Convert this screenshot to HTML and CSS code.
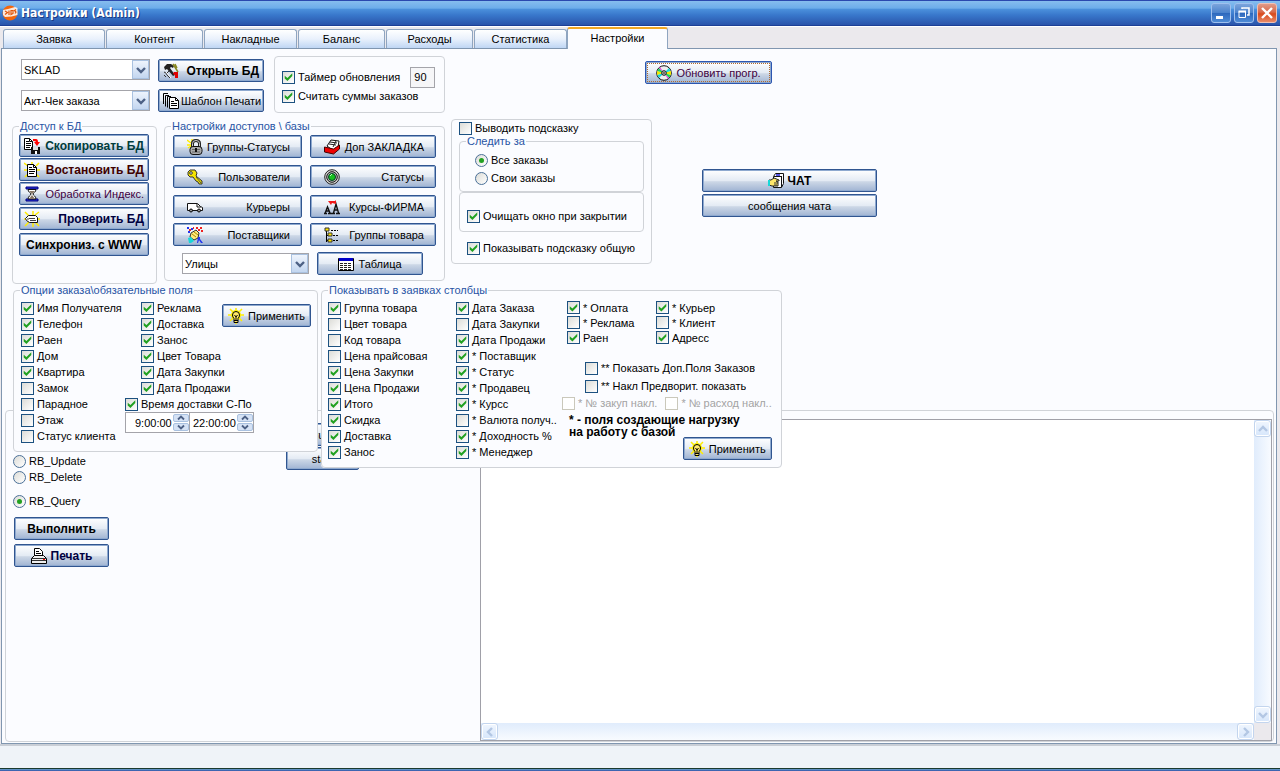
FILE: index.html
```html
<!DOCTYPE html>
<html lang="ru">
<head>
<meta charset="utf-8">
<title>Настройки (Admin)</title>
<link rel="stylesheet" href="styles.css">
</head>
<body>
<svg class="defs" aria-hidden="true">
  <symbol id="i-tools" viewBox="0 0 16 16"><path d="M1 4l3-3h4l3 2-1 2-2-1-1 1 5 7-2 1-6-7-2 1z" fill="#222"/><path d="M10 1l5 8M12 1l2 4" stroke="#882" stroke-width="1.5"/><path d="M11 9h4v6h-3v-3l-2-1z" fill="#e00000"/><path d="M1 9l2 1 1 2 3 3M1 12l2 2M6 8l-2 2" stroke="#333" fill="none"/><path d="M3 9l5 6" stroke="#fff"/></symbol>
  <symbol id="i-pages" viewBox="0 0 16 16"><path d="M.5 11V.5H5M2.500 13.500V2.500H6M4.500 14.500V3.500H8" fill="none" stroke="#000"/><path d="M6.500 4.500h6l3 3v8h-9z" fill="#fff" stroke="#000"/><path d="M12.500 4.500v3h3M8 8.500h3M8 10.500h6M8 12.500h6" fill="none" stroke="#000"/></symbol>
  <symbol id="i-copy" viewBox="0 0 16 16"><path d="M.5.500h5l3 3v8h-8z" fill="#fff" stroke="#000"/><path d="M2 3.500h3M2 5.500h5M2 7.500h5M2 9.500h4M5.500.500v3h3" fill="none" stroke="#000"/><path d="M9 1h3q2 0 2 3h2l-3 4-3-4h2q0-1-3-1z" fill="red"/><path d="M7 9h9v7H7z" fill="#111"/><path d="M9 9h5v3H9z" fill="#ddd"/><path d="M11 13h2v3h-2z" fill="#fff"/></symbol>
  <symbol id="i-restore" viewBox="0 0 16 16"><path d="M0 1l4 3M8 0v3M15 1l-3 3M0 8h16M1 15l4-4M15 15l-4-4" stroke="#ffec00" stroke-width="1.500"/><path d="M3.500 2.500h6l3 3v9h-9z" fill="#fff" stroke="#000"/><path d="M9.500 2.500v3h3M5 5.500h3M5 7.500h6M5 9.500h6M5 11.500h5" fill="none" stroke="#000"/></symbol>
  <symbol id="i-glass" viewBox="0 0 16 16"><path d="M2 1h12v2H2zM2 13h12v2H2z" fill="#2a35d8" stroke="#000080"/><path d="M4 3.500h8c0 3-3 3-3 4.500s3 2 3 5H4c0-3 3-3.500 3-5S4 6.500 4 3.500z" fill="#fff" stroke="#111"/><path d="M5 5h6L8 8zM8 9l3 4H5z" fill="#876"/></symbol>
  <symbol id="i-check" viewBox="0 0 16 16"><path d="M1 1l4 4M9 0v4M15 1l-4 3M0 8h16M1 15l4-4M9 12v4M15 15l-4-4" stroke="#ffec00" stroke-width="1.500"/><path d="M1.500 7.500l3-3h7l2 2v5h-8l-3-2z" fill="#fff" stroke="#111"/><path d="M5 7.500h6M6 9.500h6M3 8h2" stroke="#444"/></symbol>
  <symbol id="i-lock" viewBox="0 0 16 16"><path d="M0 1l4 3M0 6h4M5 0v3M1 9l3-2" stroke="#ffec00" stroke-width="1.500"/><path d="M5.500 8V4.500q0-3 3.500-3t3.500 3V8" fill="none" stroke="#222" stroke-width="3"/><path d="M5.500 8V4.500q0-3 3.500-3t3.500 3V8" fill="none" stroke="#ccc"/><rect x="3" y="7.500" width="12" height="8" rx="3" fill="#aaa" stroke="#111"/><path d="M5 10.500h8M5 13h8" stroke="#666"/><path d="M8 9h2v4H8z" fill="#111"/></symbol>
  <symbol id="i-key" viewBox="0 0 16 16"><path d="M1 3l2-2h5l2 3-1 3 6 5v3h-3l-1-2-2-1-3-4H3L1 6z" fill="#f5e400" stroke="#333"/><circle cx="4" cy="4" r="1.300" fill="#fff" stroke="#333"/><path d="M9 8l5 6" stroke="#554"/></symbol>
  <symbol id="i-van" viewBox="0 0 16 16"><path d="M.5 4.500h10l3 3 2 1v3H.5z" fill="#fff" stroke="#111"/><path d="M10 5v3h4" fill="none" stroke="#111"/><circle cx="4" cy="11.500" r="1.500" fill="#999" stroke="#000"/><circle cx="12" cy="11.500" r="1.500" fill="#999" stroke="#000"/></symbol>
  <symbol id="i-suppliers" viewBox="0 0 16 16"><path d="M0 0h2v2H0zM4 1h2v2H4zM1 4h2v2H1z" fill="#23e"/><path d="M9 0h2v2H9zM13 0h2v2h-2zM11 2h2v2h-2zM14 3h2v2h-2zM2 2h2v2H2zM6 0h1v2H6z" fill="#e22"/><path d="M4 6l5-3 3 3-1 5-4 2-4-3z" fill="#ffe97a" stroke="#333"/><path d="M5 7l4 3M7 5l4 3" stroke="#a80"/><path d="M1 11l3-1 3 4-3 2H2z" fill="#18d8d8"/><path d="M11 10h2v2l3 4h-2l-2-3-1 3h-1z" fill="#23e"/></symbol>
  <symbol id="i-cards" viewBox="0 0 16 16"><path d="M3 7l4-6 8 1-1 6-4 4z" fill="#fff" stroke="#111"/><path d="M5 5l7 1M6 3l7 1M12 2l-3 6" stroke="#222"/><path d="M.5 8l9 2 6-4v4l-6 5-9-2z" fill="#f00000" stroke="#400"/></symbol>
  <symbol id="i-target" viewBox="0 0 16 16"><circle cx="8" cy="8" r="7.300" fill="#ddd" stroke="#222"/><circle cx="8" cy="8" r="5.300" fill="#bbb" stroke="#111"/><circle cx="8" cy="8" r="3.500" fill="#18c020" stroke="#042"/><path d="M6 7l2-2" stroke="#bfb"/></symbol>
  <symbol id="i-fonts" viewBox="0 0 16 16"><path d="M0 14.500h3M4 14.500h4M1.200 14L3.500 8l2.500 6M2 12h3M8 14.500h3M12 14.500h4M9.500 14L12 5l2.500 9M10 11h4" fill="none" stroke="#111" stroke-width="1.400"/><path d="M4 2h7l1-1v4L8 4 7 6z" fill="#f01818"/></symbol>
  <symbol id="i-tree" viewBox="0 0 16 16"><path d="M2.500 3v12M3 8.500h3M3 13.500h3" stroke="#000"/><path d="M7 3.500h7M9 8.500h6M9 13.500h6" stroke="#000" stroke-dasharray="2 1"/><path d="M1 1h4v3H1zM4 6h4v3H4zM4 12h4v3H4z" fill="#ffe500" stroke="#333"/></symbol>
  <symbol id="i-table" viewBox="0 0 16 16"><path d="M.5 2.500h15v12H.5z" fill="#fff" stroke="#000"/><path d="M1 2h14v3H1z" fill="#0000c8"/><path d="M2 7.500h12M2 9.500h12M2 11.500h12M2 13.500h12" stroke="#222" stroke-dasharray="3 1"/></symbol>
  <symbol id="i-cd" viewBox="0 0 16 16"><circle cx="8" cy="8" r="7.300" fill="#eee" stroke="#111"/><path d="M8 8L1 6v4z" fill="#f0e800"/><path d="M8 8l7-2v4z" fill="#f0e800"/><path d="M8 8L1.500 6l1.500-3zM8 8l6.500 2-1.500 3z" fill="#18d858"/><path d="M8 8L1.500 10l1.500 3zM8 8l6.500-2L13 3z" fill="#18d8d8"/><path d="M8 8L3 3l1-1zM8 8l5 5-1 1z" fill="#e83ae8"/><circle cx="8" cy="8" r="2.300" fill="#ccc" stroke="#111"/><circle cx="8" cy="8" r=".8"/></symbol>
  <symbol id="i-bulb" viewBox="0 0 16 16"><path d="M8 0v16M0 7h16M2 1l12 12M14 1L2 13" stroke="#ffee00" stroke-width="1.500"/><circle cx="8" cy="7" r="5" fill="#fff000"/><path d="M6 10.500Q4.500 9 4.500 7a3.500 3.500 0 017 0q0 2-1.500 3.500v4H6z" fill="#ffe96a" stroke="#000"/><path d="M6.500 7l1.500 2 1.500-2M8 9v3M6 12.500h4" fill="none" stroke="#000"/></symbol>
  <symbol id="i-chat" viewBox="0 0 16 16"><path d="M5.500 3.500l2-3h8v10l-2 4h-8z" fill="#fff" stroke="#111"/><path d="M6 3.500h7M13.500 3v11" stroke="#111"/><path d="M8 2h4" stroke="#22d" stroke-width="1.500"/><path d="M1 7h2l3-2 5 2v1H8l2 1v4H4L1 12z" fill="#ffe86a" stroke="#222"/><path d="M0 7h2v6H0z" fill="#18d8d8"/><path d="M6 10h4M6 12h3" stroke="#333"/></symbol>
  <symbol id="i-print" viewBox="0 0 16 16"><path d="M3.500 8V.500h5l3 3V8" fill="#fff" stroke="#000"/><path d="M5 3.500h3M5 5.500h5" stroke="#000"/><path d="M.5 10.500l3-3h9l3 3v5H.5z" fill="#eee" stroke="#000"/><path d="M1 10.500h14M1 12.500h14" stroke="#333"/><path d="M12 11h2v1h-2z" fill="red"/></symbol>
  <symbol id="i-down" viewBox="0 0 10 8"><path d="M1 2l4 4 4-4" fill="none" stroke="#4d6185" stroke-width="2.400"/></symbol>
  <symbol id="i-chev" viewBox="0 0 10 10"><path d="M1 3l4 4 4-4" fill="none" stroke="#b3c7e4" stroke-width="2.400"/></symbol>
</svg>

<div class="window">
  <header class="titlebar">
    <svg class="logo" viewBox="0 0 16 16"><circle cx="8" cy="8" r="7.500" fill="#f2660e"/><path d="M1 5l5-1 7-2 2.500 1v7l-6 1.500L3 12 1 10z" fill="#fff" opacity=".85"/><path d="M3 6l2.500 1.500L3 9.500M7 5.500v4.500M9 5.500v4l2-1v-3zM14 4.500l-1.500 1L14 7l-1 1.500" fill="none" stroke="#e2560b" stroke-width="1.200"/></svg>
    <h1>Настройки (Admin)</h1>
    <button class="cap" aria-label="Свернуть"><svg viewBox="0 0 18 18"><path d="M4 12h7v3H4z" fill="#fff"/></svg></button>
    <button class="cap" aria-label="Восстановить"><svg viewBox="0 0 18 18"><path d="M7 5V4h7v7h-2" fill="none" stroke="#fff" stroke-width="1.500"/><path d="M4 7.500h6.500v6H4z" fill="none" stroke="#fff"/><path d="M3.500 7.500h7.500" stroke="#fff" stroke-width="2"/></svg></button>
    <button class="cap close" aria-label="Закрыть"><svg viewBox="0 0 18 18"><path d="M4 4l10 10M14 4L4 14" stroke="#fff" stroke-width="2.400"/></svg></button>
  </header>

  <nav class="tabs">
    <button class="w102">Заявка</button><button class="w97">Контент</button><button class="w93">Накладные</button><button class="w87">Баланс</button><button class="w87">Расходы</button><button class="w93">Статистика</button><button class="w101 active">Настройки</button>
  </nav>

  <main class="page">
    <div class="top">
      <div class="leftcol">
        <div class="dbrow">
          <div class="combos">
            <div class="combo"><select aria-label="База данных"><option>SKLAD</option></select><span><svg><use href="#i-down"/></svg></span></div>
            <div class="combo"><select aria-label="Шаблон"><option>Акт-Чек заказа</option></select><span><svg><use href="#i-down"/></svg></span></div>
          </div>
          <div class="dbbuttons">
            <button class="btn tight bold"><svg><use href="#i-tools"/></svg>Открыть БД</button>
            <button class="btn tight"><svg><use href="#i-pages"/></svg>Шаблон Печати</button>
          </div>
          <div class="frame timer">
            <div class="timerline"><label><input type="checkbox" checked>Таймер обновления</label><input class="num" type="text" value="90" aria-label="Интервал"></div>
            <label><input type="checkbox" checked>Считать суммы заказов</label>
          </div>
        </div>
        <div class="groups">
          <fieldset class="access">
            <legend>Доступ к БД</legend>
            <div class="accessgrid">
              <button class="btn tight bold green"><svg><use href="#i-copy"/></svg>Скопировать БД</button>
              <button class="btn tight bold maroon"><svg><use href="#i-restore"/></svg>Востановить БД</button>
              <button class="btn tight purple"><svg><use href="#i-glass"/></svg>Обработка Индекс.</button>
              <button class="btn tight bold navy"><svg><use href="#i-check"/></svg>Проверить БД</button>
              <button class="btn bold">Синхрониз. с WWW</button>
            </div>
          </fieldset>
          <fieldset class="rights">
            <legend>Настройки доступов \ базы</legend>
            <div class="rightsgrid">
              <button class="btn spread"><svg><use href="#i-lock"/></svg>Группы-Статусы</button>
              <button class="btn spread"><svg><use href="#i-cards"/></svg>Доп ЗАКЛАДКА</button>
              <button class="btn spread"><svg><use href="#i-key"/></svg>Пользователи</button>
              <button class="btn spread"><svg><use href="#i-target"/></svg>Статусы</button>
              <button class="btn spread"><svg><use href="#i-van"/></svg>Курьеры</button>
              <button class="btn spread"><svg><use href="#i-fonts"/></svg>Курсы-ФИРМА</button>
              <button class="btn spread"><svg><use href="#i-suppliers"/></svg>Поставщики</button>
              <button class="btn spread"><svg><use href="#i-tree"/></svg>Группы товара</button>
            </div>
            <div class="tablerow">
              <div class="combo"><select aria-label="Таблица"><option>Улицы</option></select><span><svg><use href="#i-down"/></svg></span></div>
              <button class="btn"><svg><use href="#i-table"/></svg>Таблица</button>
            </div>
          </fieldset>
        </div>
      </div>

      <div class="rightcol">
        <button class="btn update purple"><svg><use href="#i-cd"/></svg>Обновить прогр.</button>
        <div class="hintrow">
          <div class="frame hint">
            <label><input type="checkbox">Выводить подсказку</label>
            <fieldset class="watch">
              <legend>Следить за</legend>
              <label><input type="radio" name="watch" checked>Все заказы</label>
              <label><input type="radio" name="watch">Свои заказы</label>
            </fieldset>
            <div class="frame clear"><label><input type="checkbox" checked>Очищать окно при закрытии</label></div>
            <label class="common"><input type="checkbox" checked>Показывать подсказку общую</label>
          </div>
          <div class="chat">
            <button class="btn bold"><svg><use href="#i-chat"/></svg>ЧАТ</button>
            <button class="btn">сообщения чата</button>
          </div>
        </div>
      </div>
    </div>

    <div class="lower">
      <div class="options">
        <fieldset class="fields">
          <legend>Опции заказа\обязательные поля</legend>
          <div class="fieldsbody">
            <div class="list">
              <label><input type="checkbox" checked>Имя Получателя</label>
              <label><input type="checkbox" checked>Телефон</label>
              <label><input type="checkbox" checked>Раен</label>
              <label><input type="checkbox" checked>Дом</label>
              <label><input type="checkbox" checked>Квартира</label>
              <label><input type="checkbox">Замок</label>
              <label><input type="checkbox">Парадное</label>
              <label><input type="checkbox">Этаж</label>
              <label><input type="checkbox">Статус клиента</label>
            </div>
            <div class="second">
              <div class="withapply">
                <div class="list">
                  <label><input type="checkbox" checked>Реклама</label>
                  <label><input type="checkbox" checked>Доставка</label>
                  <label><input type="checkbox" checked>Занос</label>
                  <label><input type="checkbox" checked>Цвет Товара</label>
                  <label><input type="checkbox" checked>Дата Закупки</label>
                  <label><input type="checkbox" checked>Дата Продажи</label>
                </div>
                <button class="btn apply"><svg><use href="#i-bulb"/></svg>Применить</button>
              </div>
              <label><input type="checkbox" checked>Время доставки С-По</label>
              <div class="times">
                <div class="time"><input type="text" value="9:00:00" aria-label="С"><span class="spin"><button aria-label="Больше"><svg class="up"><use href="#i-down"/></svg></button><button aria-label="Меньше"><svg><use href="#i-down"/></svg></button></span></div>
                <div class="time"><input type="text" value="22:00:00" aria-label="По"><span class="spin"><button aria-label="Больше"><svg class="up"><use href="#i-down"/></svg></button><button aria-label="Меньше"><svg><use href="#i-down"/></svg></button></span></div>
              </div>
            </div>
          </div>
        </fieldset>

        <fieldset class="columns">
          <legend>Показывать в заявках столбцы</legend>
          <div class="columnsbody">
            <div class="list">
              <label><input type="checkbox" checked>Группа товара</label>
              <label><input type="checkbox">Цвет товара</label>
              <label><input type="checkbox">Код товара</label>
              <label><input type="checkbox">Цена прайсовая</label>
              <label><input type="checkbox" checked>Цена Закупки</label>
              <label><input type="checkbox" checked>Цена Продажи</label>
              <label><input type="checkbox" checked>Итого</label>
              <label><input type="checkbox" checked>Скидка</label>
              <label><input type="checkbox" checked>Доставка</label>
              <label><input type="checkbox" checked>Занос</label>
            </div>
            <div class="list">
              <label><input type="checkbox" checked>Дата Заказа</label>
              <label><input type="checkbox">Дата Закупки</label>
              <label><input type="checkbox" checked>Дата Продажи</label>
              <label><input type="checkbox" checked>* Поставщик</label>
              <label><input type="checkbox" checked>* Статус</label>
              <label><input type="checkbox" checked>* Продавец</label>
              <label><input type="checkbox" checked>* Курсс</label>
              <label><input type="checkbox">* Валюта получ..</label>
              <label><input type="checkbox" checked>* Доходность %</label>
              <label><input type="checkbox" checked>* Менеджер</label>
            </div>
            <div class="extra">
              <div class="pairs">
                <label><input type="checkbox" checked>* Оплата</label><label><input type="checkbox" checked>* Курьер</label>
                <label><input type="checkbox">* Реклама</label><label><input type="checkbox">* Клиент</label>
                <label><input type="checkbox" checked>Раен</label><label><input type="checkbox" checked>Адресс</label>
              </div>
              <div class="stars">
                <label><input type="checkbox"><span>** Показать Доп.Поля Заказов</span></label>
                <label><input type="checkbox"><span>** Накл Предворит. показать</span></label>
              </div>
              <div class="disabled">
                <label><input type="checkbox" disabled>* № закуп накл.</label>
                <label><input type="checkbox" disabled>* № расход накл..</label>
              </div>
              <p class="note">* - поля создающие нагрузку<br>на работу с базой</p>
              <button class="btn apply"><svg><use href="#i-bulb"/></svg>Применить</button>
            </div>
          </div>
        </fieldset>
      </div>

      <section class="frame sql">
        <div class="sqlside">
          <div class="query">
            <label><input type="radio" name="rb">RB_Update</label>
            <label><input type="radio" name="rb">RB_Delete</label>
            <label class="spaced"><input type="radio" name="rb" checked>RB_Query</label>
            <button class="btn bold">Выполнить</button>
            <button class="btn bold navy"><svg><use href="#i-print"/></svg>Печать</button>
          </div>
          <div class="run">
            <button class="btn">run</button>
            <button class="btn">start</button>
          </div>
        </div>
        <div class="memo">
          <textarea aria-label="SQL"></textarea>
          <div class="vbar"><button aria-label="Вверх"><svg class="up"><use href="#i-chev"/></svg></button><button aria-label="Вниз"><svg><use href="#i-chev"/></svg></button></div>
          <div class="hbar"><button aria-label="Влево"><svg class="left"><use href="#i-chev"/></svg></button><button aria-label="Вправо"><svg class="right"><use href="#i-chev"/></svg></button></div>
        </div>
      </section>
    </div>
  </main>

  <footer class="status"></footer>
  <div class="deskedge"></div>
</div>
</body>
</html>
```

FILE: styles.css
```css
* { box-sizing: border-box; }

body {
  margin: 0;
  font: 11px/14px "Liberation Sans", Arial, sans-serif;
  color: #000;
}

button, input, select, textarea { font: inherit; color: inherit; margin: 0; }
.defs { display: none; }
fieldset { margin: 0; padding: 0; min-width: 0; }
legend { margin-left: 6px; padding: 0 1px; line-height: 12px; color: #2854a4; }
fieldset, .frame { border: 1px solid #d0d3d8; border-radius: 4px; }

.window {
  display: flex;
  flex-direction: column;
  min-height: 100vh;
  background: #ebe9ed;
}

/* Title bar */
.titlebar {
  display: flex;
  align-items: center;
  gap: 3px;
  height: 26px;
  padding: 0 3px 0 2px;
  border-top: 1px solid #2a48ae;
  border-bottom: 1px solid #1d3f96;
  background: linear-gradient(#86bdee, #6cacea 30%, #4b90dc 34%, #3876ca 60%, #2a54aa);
}
.logo { width: 16px; height: 16px; }
.titlebar h1 {
  flex: 1;
  margin: 0;
  font: bold 12px/16px "DejaVu Sans Condensed", "DejaVu Sans", sans-serif;
  color: #fff;
  text-shadow: 1px 1px #1c3a80;
}
.cap {
  width: 20px;
  height: 20px;
  padding: 0;
  border: 1px solid #9fc0ee;
  border-radius: 3px;
  background: linear-gradient(#7ba4dc, #4a82cc 50%, #2d68bd 51%, #4e8bd6);
}
.cap svg { display: block; width: 18px; height: 18px; }
.close { background: linear-gradient(#e09a88, #d8694a 45%, #d94a1c 55%, #e88a68); border-color: #f0c0b4; }

/* Tabs */
.tabs {
  display: flex;
  align-items: flex-end;
  gap: 1px;
  height: 22px;
  padding-left: 3px;
  border-top: 1px solid #fff;
}
.tabs button {
  height: 19px;
  padding: 0;
  border: 1px solid #8fa5c0;
  border-bottom: 0;
  border-radius: 3px 3px 0 0;
  background: linear-gradient(#fff, #e9f1fc 50%, #bfd6f4);
}
.tabs .active {
  height: 22px;
  margin: 0 0 -1px -1px;
  padding-bottom: 3px;
  background: #fbfcff;
  border-top: 2px solid #f2a824;
  z-index: 1;
}
.w87 { width: 87px; }
.w93 { width: 93px; }
.w97 { width: 97px; }
.w101 { width: 101px; }
.w102 { width: 102px; }

.page {
  flex: 1;
  display: flex;
  flex-direction: column;
  margin: 0 3px 0 1px;
  padding: 7px 2px 1px 3px;
  border: 1px solid #8096b0;
  background: #fbfcff;
}

/* Buttons */
.btn {
  display: flex;
  align-items: center;
  justify-content: center;
  gap: 4px;
  height: 23px;
  padding: 0 3px;
  border: 1px solid #305590;
  border-radius: 2px;
  background: linear-gradient(#fff, #e4ebf4 50%, #ccd7e6 56%, #a0b4d3);
  box-shadow: inset 0 0 0 1px #8ea9cf;
  white-space: nowrap;
}
.btn svg { width: 16px; height: 16px; flex: none; }
.tight { justify-content: space-between; padding: 0 4px; gap: 2px; }
.spread { justify-content: space-between; padding: 0 11px 0 13px; }
.bold { font-weight: bold; font-size: 12px; }
.green { color: #003c3c; }
.maroon { color: #400000; }
.purple { color: #400040; }
.navy { color: #000040; }
.apply { width: 89px; }

/* Drop-downs */
.combo {
  display: flex;
  height: 21px;
  width: 129px;
  border: 1px solid #a4a4aa;
  background: #fff;
}
.combo select {
  flex: 1;
  min-width: 0;
  padding: 0 2px;
  border: 0;
  background: #fff;
  appearance: none;
}
.combo span {
  display: flex;
  align-items: center;
  justify-content: center;
  width: 17px;
  border: 1px solid #a9c1e0;
  background: linear-gradient(#eef4fd, #c3d6f0);
}
.combo svg { width: 10px; height: 8px; }

/* Check boxes and radio buttons */
label { display: flex; align-items: center; gap: 3px; height: 16px; white-space: nowrap; }
input[type="checkbox"], input[type="radio"] {
  appearance: none;
  flex: none;
  display: grid;
  place-items: center;
  width: 13px;
  height: 13px;
  border: 1px solid #1c5180;
  background: linear-gradient(135deg, #dcdcd7, #fff);
}
input[type="radio"] { border-radius: 50%; border-color: #4a7098; }
input[type="checkbox"]:checked::before {
  content: "";
  width: 9px;
  height: 9px;
  background: #21a121;
  clip-path: polygon(8% 35%, 38% 62%, 92% 8%, 92% 40%, 38% 95%, 8% 66%);
}
input[type="radio"]:checked::before {
  content: "";
  width: 5px;
  height: 5px;
  border-radius: 50%;
  background: #21a121;
}
input[type="checkbox"]:disabled { border-color: #cac8bb; background: #fff; }

/* Upper part */
.top { display: flex; gap: 6px; }
.leftcol { width: 433px; margin-left: 7px; flex: none; }
.dbrow { display: flex; gap: 8px; padding-left: 9px; height: 57px; }
.combos, .dbbuttons { display: flex; flex-direction: column; gap: 10px; padding-top: 3px; }
.dbbuttons { gap: 7px; width: 106px; }
.timer { flex: 1; padding: 9px 7px; margin-left: 2px; }
.timerline { display: flex; align-items: center; gap: 10px; height: 22px; }
.num { width: 25px; height: 21px; padding: 0 3px; border: 1px solid #a4a4aa; background: #f6f6f8; }

.groups { display: flex; align-items: flex-start; gap: 7px; padding-top: 7px; }
.access { width: 145px; height: 164px; }
.accessgrid { display: grid; grid-template-rows: 24px 24px 25px 26px 24px; margin: 2px 7px 0 6px; }
.rights { flex: 1; height: 161px; }
.rightsgrid { display: grid; grid-template-columns: 1fr 1fr; column-gap: 8px; grid-template-rows: 30px 30px 28px 29px; margin: 3px 8px 0; }
.tablerow { display: flex; align-items: center; gap: 8px; padding-left: 17px; }
.tablerow .combo { width: 127px; }
.tablerow .btn { width: 106px; }

.rightcol { flex: 1; padding-top: 5px; }
.update { width: 127px; margin-left: 194px; border-color: #2c56b0; outline: 1px dotted #b06a30; outline-offset: -3px; }
.hintrow { display: flex; gap: 50px; padding-top: 35px; }
.hint { width: 201px; height: 145px; padding: 0 7px; }
.watch { height: 57px; margin-top: -1px; padding: 4px 0 0 15px; }
.watch legend { margin-left: -9px; }
.watch label { height: 18px; }
.clear { height: 40px; padding: 15px 0 0 7px; }
.common { margin: 8px 0 0 8px; }
.chat { display: flex; flex-direction: column; gap: 2px; width: 175px; padding-top: 50px; }

/* Lower part: the option groups lie over the query panel */
.lower { flex: 1; display: grid; grid-template-rows: 126px 1fr; grid-template-columns: 1fr; }
.options { grid-area: 1 / 1 / 3 / 2; align-self: start; justify-self: start; display: flex; align-items: flex-start; gap: 3px; margin-left: 8px; z-index: 1; }
.options fieldset { background: #fbfcff; }
.sql { grid-area: 2 / 1 / 3 / 2; display: flex; padding: 8px 1px 0 7px; }

.fields { width: 305px; height: 168px; }
.columns { width: 461px; height: 184px; }
.fieldsbody { display: grid; grid-template-columns: 104px 1fr; padding: 4px 7px; }
.withapply { display: flex; padding-left: 16px; }
.withapply .list { width: 81px; flex: none; }
.withapply .apply { flex: none; margin-top: 4px; }
.times { display: flex; width: 129px; height: 21px; border: 1px solid #a4a4aa; background: #fff; }
.time { flex: 1; display: flex; min-width: 0; }
.time + .time { border-left: 1px solid #a4a4aa; }
.time input { flex: 1; min-width: 0; padding: 0 0 0 3px; border: 0; background: none; }
.time:first-child input { padding-left: 9px; }
.spin { display: flex; flex-direction: column; gap: 1px; width: 16px; padding: 1px 0; }
.spin button { flex: 1; display: grid; place-items: center; min-height: 0; padding: 0; border: 1px solid #a9c1e0; border-radius: 2px; background: #d5e2f5; }
.spin svg { width: 8px; height: 6px; }
.up { transform: rotate(180deg); }
.left { transform: rotate(90deg); }
.right { transform: rotate(270deg); }

.columnsbody { display: grid; grid-template-columns: 128px 106px 1fr; padding: 4px 11px 0 6px; }
.extra { display: flex; flex-direction: column; }
.pairs { display: grid; grid-template-columns: 89px 1fr; padding-left: 5px; }
.pairs label { height: 15px; }
.stars { width: 194px; padding: 14px 0 0 23px; }
.stars label { height: 18px; }
.stars span { overflow: hidden; }
.disabled { display: flex; gap: 8px; color: #a3a3a3; }
.note { margin: 3px 0 0 7px; font-weight: bold; font-size: 12px; line-height: 12px; }
.extra .apply { align-self: flex-end; margin-top: -1px; }

.sqlside { display: flex; width: 467px; flex: none; }
.query { width: 96px; padding-top: 34px; }
.query .spaced { margin: 8px 0; }
.query .btn { width: 95px; margin: 0 0 4px 1px; }
.run { width: 73px; margin: 4px 0 0 177px; }
.run .btn { width: 100%; margin-bottom: 1px; }
.memo { flex: 1; display: grid; grid-template: 1fr 17px / 1fr 17px; border: 1px solid #a0a0a8; background: #ebe9ed; }
.memo textarea { width: 100%; border: 0; resize: none; outline: 0; background: #fff; }
.vbar, .hbar { display: flex; justify-content: space-between; background: linear-gradient(90deg, #e0ecfc, #f8fbff); }
.vbar { flex-direction: column; }
.hbar { background: linear-gradient(#e0ecfc, #f8fbff); }
.vbar button, .hbar button { display: grid; place-items: center; width: 17px; height: 17px; padding: 0; border: 1px solid #c3d5ee; border-radius: 3px; background: linear-gradient(#f0f6fe, #d6e6fb); box-shadow: inset 0 0 0 1px #fff; }
.vbar svg, .hbar svg { width: 10px; height: 10px; }

.status { height: 24px; border-top: 2px solid #c9ced6; background: #eff3f8; }
.deskedge { height: 3px; border-top: 1px solid #1b3a30; background: linear-gradient(#6fa6cc, #2c50a8); }
```
